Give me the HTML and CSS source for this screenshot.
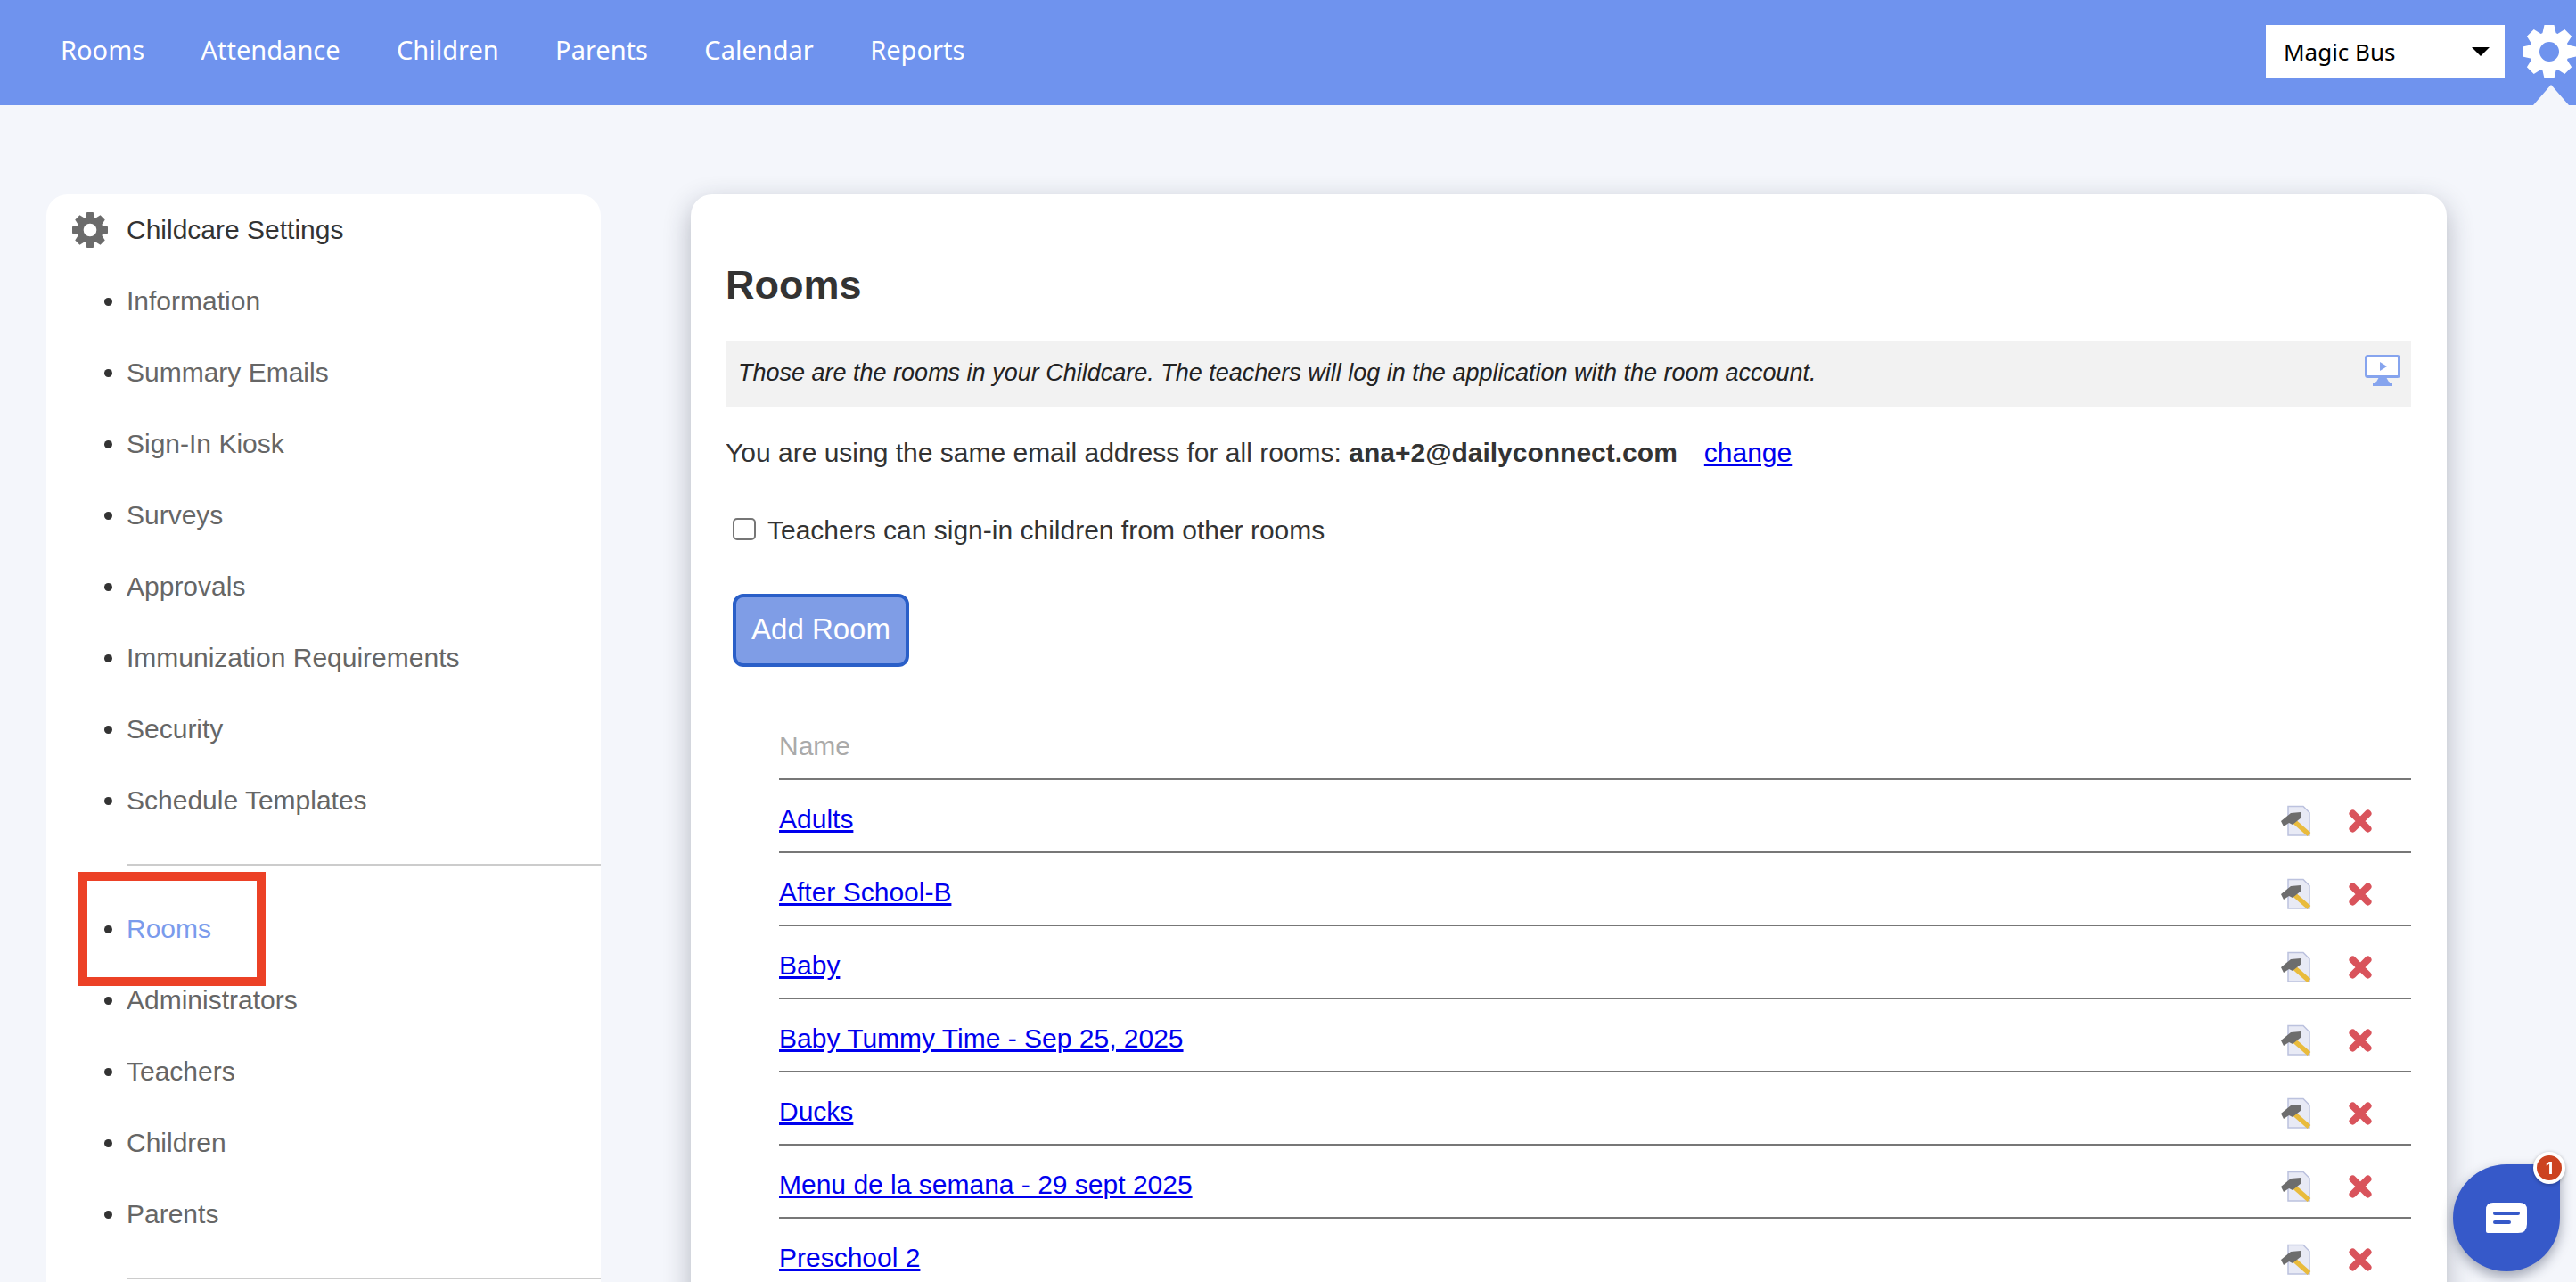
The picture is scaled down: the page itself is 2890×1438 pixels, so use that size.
FILE: index.html
```html
<!DOCTYPE html>
<html lang="en">
<head>
<meta charset="utf-8">
<title>Rooms</title>
<link rel="stylesheet" href="styles.css">
</head>
<body>
<svg class="defs" width="0" height="0" aria-hidden="true">
  <symbol id="gear" viewBox="-30 -30 60 60">
    <circle r="16.5" fill="none" stroke="currentColor" stroke-width="11"/>
    <g fill="currentColor">
      <polygon id="tooth" points="-5.5,-30 5.5,-30 8,-19 -8,-19"/>
      <use href="#tooth" transform="rotate(45)"/>
      <use href="#tooth" transform="rotate(90)"/>
      <use href="#tooth" transform="rotate(135)"/>
      <use href="#tooth" transform="rotate(180)"/>
      <use href="#tooth" transform="rotate(225)"/>
      <use href="#tooth" transform="rotate(270)"/>
      <use href="#tooth" transform="rotate(315)"/>
    </g>
  </symbol>
  <symbol id="hammer" viewBox="0 0 36 36">
    <polygon points="9,1.5 26,1.5 33,8.5 33,34 9,34" fill="#e8eaf5" stroke="#bcc2de" stroke-width="1.5"/>
    <line x1="12" y1="15" x2="32.5" y2="33" stroke="#e9bb3c" stroke-width="5.5"/>
    <polygon points="1,18 4,24 10,20 14,22 24,14 23,8 12,9" fill="#6d6d6d"/>
  </symbol>
  <symbol id="cross" viewBox="0 0 26 26">
    <path d="M4.5 4.5 L21.5 21.5 M21.5 4.5 L4.5 21.5" stroke="#d9535b" stroke-width="8" stroke-linecap="round"/>
  </symbol>
</svg>

<header class="topbar">
  <nav class="topnav">
    <a>Rooms</a><a>Attendance</a><a>Children</a><a>Parents</a><a>Calendar</a><a>Reports</a>
  </nav>
  <div class="topright">
    <div class="select"><span>Magic Bus</span><i class="caret"></i></div>
    <svg class="topgear"><use href="#gear"/></svg>
    <i class="notch"></i>
  </div>
</header>

<main class="layout">
  <aside class="sidebar">
    <h2 class="side-title"><svg class="side-gear"><use href="#gear"/></svg>Childcare Settings</h2>
    <ul class="side-list">
      <li>Information</li>
      <li>Summary Emails</li>
      <li>Sign-In Kiosk</li>
      <li>Surveys</li>
      <li>Approvals</li>
      <li>Immunization Requirements</li>
      <li>Security</li>
      <li>Schedule Templates</li>
    </ul>
    <hr class="side-rule">
    <ul class="side-list">
      <li class="active">Rooms<i class="callout"></i></li>
      <li>Administrators</li>
      <li>Teachers</li>
      <li>Children</li>
      <li>Parents</li>
    </ul>
    <hr class="side-rule">
  </aside>

  <section class="panel">
    <h1 class="title">Rooms</h1>
    <div class="note">
      <em>Those are the rooms in your Childcare. The teachers will log in the application with the room account.</em>
      <svg class="monitor" viewBox="0 0 40 36">
        <rect x="1.5" y="1.5" width="37" height="23" rx="2" fill="#fff" stroke="#86a4ee" stroke-width="3"/>
        <polygon points="17,8 17,18 25,13" fill="#86a4ee"/>
        <polygon points="16,25 24,25 28,32 12,32" fill="#86a4ee"/>
        <rect x="9" y="32" width="22" height="3" fill="#86a4ee"/>
      </svg>
    </div>
    <p class="email">You are using the same email address for all rooms: <b>ana+2@dailyconnect.com</b><a class="change" href="#">change</a></p>
    <label class="check"><input type="checkbox">Teachers can sign-in children from other rooms</label>
    <button class="add">Add Room</button>
    <div class="rooms">
      <div class="rooms-head">Name</div>
      <div class="room"><a href="#">Adults</a><svg class="ic-hammer"><use href="#hammer"/></svg><svg class="ic-cross"><use href="#cross"/></svg></div>
      <div class="room"><a href="#">After School-B</a><svg class="ic-hammer"><use href="#hammer"/></svg><svg class="ic-cross"><use href="#cross"/></svg></div>
      <div class="room"><a href="#">Baby</a><svg class="ic-hammer"><use href="#hammer"/></svg><svg class="ic-cross"><use href="#cross"/></svg></div>
      <div class="room"><a href="#">Baby Tummy Time - Sep 25, 2025</a><svg class="ic-hammer"><use href="#hammer"/></svg><svg class="ic-cross"><use href="#cross"/></svg></div>
      <div class="room"><a href="#">Ducks</a><svg class="ic-hammer"><use href="#hammer"/></svg><svg class="ic-cross"><use href="#cross"/></svg></div>
      <div class="room"><a href="#">Menu de la semana - 29 sept 2025</a><svg class="ic-hammer"><use href="#hammer"/></svg><svg class="ic-cross"><use href="#cross"/></svg></div>
      <div class="room"><a href="#">Preschool 2</a><svg class="ic-hammer"><use href="#hammer"/></svg><svg class="ic-cross"><use href="#cross"/></svg></div>
    </div>
  </section>
</main>

<div class="chat">
  <svg class="chat-icon" viewBox="0 0 46 34">
    <path d="M8 0 H38 Q46 0 46 8 V24 Q46 34 36 34 H2 Q0 34 0 32 V8 Q0 0 8 0 Z" fill="#fff"/>
    <rect x="8" y="10" width="30" height="4" rx="2" fill="#3659c9"/>
    <rect x="8" y="20" width="20" height="4" rx="2" fill="#3659c9"/>
  </svg>
  <span class="badge">1</span>
</div>
</body>
</html>
```

FILE: styles.css
```css
* { box-sizing: border-box; }
html, body { margin: 0; height: 1438px; overflow: hidden; }
body { background: #f4f6fb; font-family: "Liberation Sans", Arial, sans-serif; color: #333; position: relative; }
.defs { position: absolute; }

.topbar { height: 118px; background: #6f93ee; display: flex; justify-content: space-between; align-items: flex-start; overflow: hidden; }
.topnav { display: flex; gap: 63.4px; padding: 36px 0 0 68px; font-family: "Noto Sans", sans-serif; font-size: 29px; line-height: 40px; color: #fff; }
.topright { display: flex; align-items: flex-start; padding-top: 28px; position: relative; width: 348px; flex: none; }
.select { width: 270px; height: 60px; background: #fff; color: #000; display: flex; align-items: center; justify-content: space-between; padding: 0 17px 0 20px; font-family: "Noto Sans", sans-serif; font-size: 26px; }
.caret { width: 0; height: 0; border: 10px solid transparent; border-top-color: #000; border-bottom: 0; }
.topgear { width: 60px; height: 60px; margin-left: 20px; flex: none; color: #fff; }
.notch { position: absolute; right: 8px; top: 95px; width: 0; height: 0; border: 20px solid transparent; border-top: 0; border-bottom: 23px solid #f4f6fb; }

.layout { display: flex; align-items: flex-start; gap: 101px; padding: 100px 0 0 52px; }

.sidebar { width: 622px; flex: none; background: #fff; border-radius: 24px 24px 0 0; height: 1300px; padding-top: 20px; position: relative; }
.side-title { display: flex; align-items: center; margin: 0; height: 40px; padding-left: 29px; gap: 21px; font-size: 30px; font-weight: 400; color: #333; }
.side-gear { width: 40px; height: 40px; color: #6b6b6b; flex: none; }
.side-list { list-style: disc; margin: 0; padding: 0 0 0 90px; }
.side-list:first-of-type { padding-top: 20px; }
.side-list li { height: 80px; line-height: 80px; font-size: 30px; color: #666; position: relative; }
.side-list li::marker { color: #333; }
.side-list li.active { color: #7a9bec; }
.side-rule { margin: 31px 0 31px 90px; border: 0; height: 2px; background: #ccc; }
.callout { position: absolute; left: -54px; top: -24px; width: 210px; height: 128px; border: 10px solid #ec4126; }

.panel { width: 1970px; flex: none; background: #fff; border-radius: 24px 24px 0 0; padding: 0 40px 0 39px; height: 1300px; box-shadow: 0 10px 30px rgba(30, 35, 60, .3); }
.title { margin: 0; padding-top: 80px; font-size: 45px; line-height: 44px; font-weight: 700; color: #333; }
.note { margin-top: 40px; height: 75px; background: #f2f2f2; padding: 0 0 0 14px; display: flex; justify-content: space-between; align-items: flex-start; font-size: 27px; line-height: 73px; color: #222; }
.monitor { width: 40px; height: 36px; margin: 16px 12px 0 0; flex: none; }
.email { margin: 31px 0 0; font-size: 30px; line-height: 40px; color: #333; }
.change { margin-left: 30px; color: #0000ee; }
.check { display: flex; align-items: center; margin: 47px 0 0 8px; font-size: 30px; line-height: 40px; color: #333; }
.check input { appearance: none; width: 26px; height: 25px; margin: -3px 13px 0 0; background: #fff; border: 2px solid #767676; border-radius: 5px; }
.add { display: block; margin: 51px 0 0 8px; width: 198px; height: 82px; background: #7f9de6; color: #fff; border: 4px solid #2a5fc8; border-radius: 12px; font-family: inherit; font-size: 33px; padding: 0 0 3px; }
.rooms { margin: 53px 0 0 60px; }
.rooms-head { height: 74px; line-height: 72px; font-size: 30px; color: #aaa; border-bottom: 2px solid #777; }
.room { height: 82px; padding-top: 8px; display: flex; align-items: center; border-bottom: 2px solid #777; font-size: 30px; }
.room a { color: #0000ee; margin-right: auto; }
.ic-hammer { width: 36px; height: 36px; flex: none; margin-top: 4px; filter: blur(.5px); }
.ic-cross { width: 26px; height: 26px; flex: none; margin: 4px 44px 0 41px; filter: blur(.5px); }

.chat { position: fixed; left: 2752px; top: 1306px; width: 120px; height: 120px; background: #3659c9; border-radius: 50% 0 50% 50%; display: flex; align-items: center; justify-content: center; box-shadow: 0 6px 14px rgba(30, 40, 70, .4); }
.chat-icon { width: 46px; height: 34px; }
.badge { position: absolute; right: -6px; top: -14px; width: 36px; height: 36px; border-radius: 50%; background: #cc4320; border: 4px solid #fff; color: #fff; font-family: Inter, sans-serif; font-size: 19px; font-weight: 700; display: flex; align-items: center; justify-content: center; box-shadow: 0 1px 4px rgba(0,0,0,.3); box-sizing: content-box; width: 28px; height: 28px; }
```
